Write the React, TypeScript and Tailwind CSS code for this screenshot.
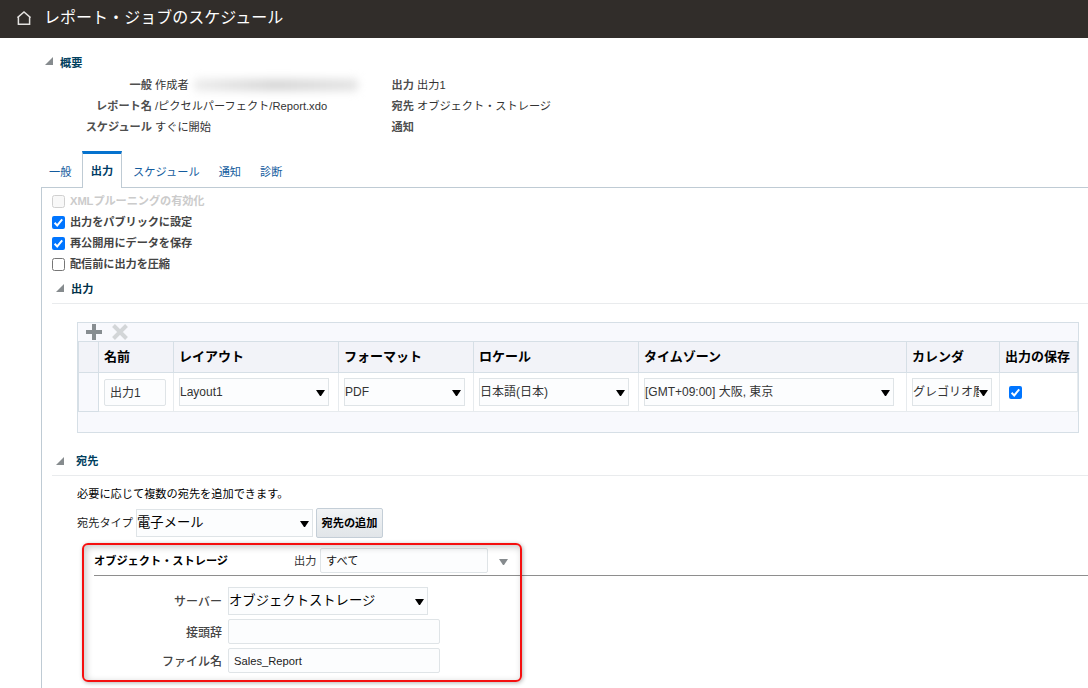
import clsx from "clsx";

const font = "font-['Liberation_Sans','Noto_Sans_CJK_JP',sans-serif]";

const tabs = ["一般", "出力", "スケジュール", "通知", "診断"];

const options = [
  { label: "XMLプルーニングの有効化", checked: false, disabled: true },
  { label: "出力をパブリックに設定", checked: true },
  { label: "再公開用にデータを保存", checked: true },
  { label: "配信前に出力を圧縮", checked: false },
];

const columns = [
  { title: "名前", width: "w-[75px]" },
  { title: "レイアウト", width: "w-[165px]", value: "Layout1", select: "w-[150px]" },
  { title: "フォーマット", width: "w-[135px]", value: "PDF", select: "w-[121px]" },
  { title: "ロケール", width: "w-[165px]", value: "日本語(日本)", select: "w-[150px]" },
  { title: "タイムゾーン", width: "w-[268px]", value: "[GMT+09:00] 大阪, 東京", select: "w-[250px]" },
  { title: "カレンダ", width: "w-[93px]", value: "グレゴリオ暦", select: "w-[80px]" },
  { title: "出力の保存", width: "w-[78px]" },
];

function Disclosure({ className }: { className?: string }) {
  return (
    <svg className={clsx("shrink-0", className)} width="8" height="8" viewBox="0 0 8 8">
      <path d="M8 0v8H0z" fill="#868b8e" />
    </svg>
  );
}

function Arrow({ color = "#000" }: { color?: string }) {
  return (
    <svg className="shrink-0" width="9" height="6" viewBox="0 0 9 6">
      <path d="M0 0h9L5 6H4z" fill={color} />
    </svg>
  );
}

function Checkbox({ checked, disabled }: { checked?: boolean; disabled?: boolean }) {
  if (checked) {
    return (
      <svg className="shrink-0" width="13" height="13" viewBox="0 0 13 13">
        <rect width="13" height="13" rx="2" fill="#0075ff" />
        <path d="M2.6 6.8l2.6 2.6 5-6" fill="none" stroke="#fff" strokeWidth="2" />
      </svg>
    );
  }
  return (
    <span
      className={clsx(
        "size-[13px] shrink-0 rounded-[2.5px] border",
        disabled ? "border-[#d0d0d0] bg-[#f8f8f8]" : "border-[#767676] bg-white"
      )}
    />
  );
}

function Select({ value, className }: { value: string; className?: string }) {
  return (
    <div className={clsx("flex h-7 items-center border border-[#dfe4e7] bg-[#fcfdfe] pr-[3px]", className)}>
      <span className="min-w-0 flex-1 overflow-hidden whitespace-nowrap">{value}</span>
      <span className="mt-px flex">
        <Arrow />
      </span>
    </div>
  );
}

function Field({ value, className }: { value?: string; className?: string }) {
  return (
    <div className={clsx("flex items-center rounded-[2px] border border-[#dfe4e7] bg-[#fcfdfe] pl-[5px]", className)}>
      {value}
    </div>
  );
}

function SummaryRow({ label, value, wide }: { label: string; value?: string; wide?: boolean }) {
  return (
    <div className="flex h-[21px] items-center">
      <span className={clsx("text-right font-bold text-[#4f4f4f]", wide ? "w-[152px]" : "w-[23px]")}>{label}</span>
      <span className="ml-[3px] text-[#333]">{value}</span>
    </div>
  );
}

function Header() {
  return (
    <header className="flex h-[38px] items-center bg-[#312d2a] pb-[3px] text-white">
      <svg className="ml-[17px] mt-[1px]" width="14" height="14" viewBox="0 0 14 14" fill="none" stroke="#e4e2e0" strokeWidth="1.5">
        <path d="M.4 6.6L7 1l6.6 5.6M1.4 5.8v7.4h11.2V5.8" />
      </svg>
      <h1 className="ml-[13px] text-base leading-none tracking-[0.03px]">レポート・ジョブのスケジュール</h1>
    </header>
  );
}

function Summary() {
  return (
    <section className="h-[113px] pt-[15px]">
      <div className="flex h-5 items-center">
        <Disclosure className="ml-[45px] mb-1" />
        <h2 className="ml-[7px] font-bold text-[#00405e]">概要</h2>
      </div>
      <div className="flex pt-px">
        <div className="w-[391px]">
          <div className="flex">
            <SummaryRow label="一般" value="作成者" wide />
            <span className="ml-[5px] mt-[5px] h-3 w-[164px] rounded bg-gradient-to-r from-[#ececec] via-[#d6d6d6] to-[#e4e4e4] blur-[4px]" />
          </div>
          <SummaryRow label="レポート名" value="/ピクセルパーフェクト/Report.xdo" wide />
          <SummaryRow label="スケジュール" value="すぐに開始" wide />
        </div>
        <div>
          <SummaryRow label="出力" value="出力1" />
          <SummaryRow label="宛先" value="オブジェクト・ストレージ" />
          <SummaryRow label="通知" />
        </div>
      </div>
    </section>
  );
}

function Tabs() {
  return (
    <nav className="ml-[41px] flex h-[37px] border-b border-[#bfcbd4]">
      {tabs.map((tab) => (
        <a
          key={tab}
          className={clsx(
            "flex items-center whitespace-nowrap",
            tab === "出力"
              ? "mr-[2px] h-[37px] w-10 justify-center border-x border-t-3 border-x-[#bfcbd4] border-t-[#0572ce] bg-white font-bold text-[#003c66]"
              : "pt-[5px] text-[#145c9e]",
            tab === "一般" && "w-[41px] pl-2",
            tab === "スケジュール" && "px-[9px] tracking-[0.05px]",
            tab === "通知" && "px-[10px]",
            tab === "診断" && "px-[9px]"
          )}
        >
          {tab}
        </a>
      ))}
    </nav>
  );
}

function OutputTable() {
  return (
    <div className="ml-[35px] mt-[18px] h-[111px] w-[1002px] border border-[#d6dfe6] bg-[#f8f9fd]">
      <div className="flex h-[18px] items-center">
        <svg className="ml-2" width="16" height="16" viewBox="0 0 16 16">
          <path d="M8 0v16M0 8h16" stroke="#878d91" strokeWidth="4" />
        </svg>
        <svg className="ml-[10px]" width="16" height="16" viewBox="0 0 16 16">
          <path d="M1.5 1.5l13 13M14.5 1.5l-13 13" stroke="#d3d6d8" strokeWidth="4" />
        </svg>
      </div>
      <div className="flex h-8 border-y border-[#d6dfe6] bg-[#f2f3f8] text-[13px] font-bold text-black">
        <span className="w-[21px] border-x border-[#d6dfe6]" />
        {columns.map((col) => (
          <span key={col.title} className={clsx("flex shrink-0 items-center whitespace-nowrap border-r border-[#d6dfe6] pl-[5px]", col.width)}>
            {col.title}
          </span>
        ))}
      </div>
      <div className="flex h-[39px] text-xs text-[#333]">
        <span className="w-[21px] border border-t-0 border-[#d6dfe6]" />
        {columns.map((col) => (
          <div key={col.title} className={clsx("flex shrink-0 items-center border-b border-r border-[#e7ebee] bg-white pl-[5px]", col.width)}>
            {col.value && <Select value={col.value} className={col.select} />}
            {col.title === "名前" && <Field value="出力1" className="mt-px h-[27px] w-[62px]" />}
            {col.title === "出力の保存" && (
              <span className="ml-1">
                <Checkbox checked />
              </span>
            )}
          </div>
        ))}
      </div>
    </div>
  );
}

function StorageForm() {
  return (
    <div className="relative ml-[52px] mt-[9px] h-[141px]">
      <div className="flex h-[29px] items-center border-b border-[#8e8e8e]">
        <span className="-mt-px w-[200px] font-bold text-black">オブジェクト・ストレージ</span>
        <span className="-mt-px w-[26px] text-[#333]">出力</span>
        <Field value="すべて" className="-mt-px h-[25px] w-[168px] text-[#111]" />
        <span className="ml-[11px] mt-[2px] flex">
          <Arrow color="#868b8e" />
        </span>
      </div>
      <div className="flex flex-col gap-1 pt-[11px]">
        <div className="flex items-center">
          <span className="w-32 pt-[2px] text-right text-xs font-medium text-[#444]">サーバー</span>
          <Select value="オブジェクトストレージ" className="ml-[6px] w-[200px] text-[13.33px] text-black" />
        </div>
        <div className="flex items-center">
          <span className="w-32 pt-[3px] text-right text-xs font-medium text-[#444]">接頭辞</span>
          <Field className="ml-[6px] h-[25px] w-[212px]" />
        </div>
        <div className="flex items-center">
          <span className="w-32 pt-[3px] text-right text-xs font-medium text-[#444]">ファイル名</span>
          <Field value="Sales_Report" className="ml-[6px] h-[25px] w-[212px] text-[11.2px] text-[#222]" />
        </div>
      </div>
      {/* highlight frame */}
      <div className="absolute -left-3 -top-1 h-[139px] w-[440px] rounded-[6px] border-2 border-[#f50f0f] shadow-[1px_1px_4px_rgba(0,0,0,0.3),inset_2px_2px_7px_rgba(0,0,0,0.22)]" />
    </div>
  );
}

export default function App() {
  return (
    <div className={clsx("h-[688px] w-[1088px] overflow-hidden bg-white text-[11.2px] leading-[16px]", font)}>
      <Header />
      <Summary />
      <Tabs />
      <main className="ml-[41px] h-[500px] border-l border-[#bfcbd4] pt-[3px]">
        <div>
          {options.map((opt) => (
            <label key={opt.label} className="ml-[10px] flex h-[21px] items-center gap-[5px]">
              <Checkbox checked={opt.checked} disabled={opt.disabled} />
              <span className={clsx("-mt-px font-bold tracking-[-0.08px]", opt.disabled ? "text-[#cbcbcb]" : "text-[#444]")}>{opt.label}</span>
            </label>
          ))}
        </div>
        <div className="ml-[10px] flex h-[29px] items-center border-b border-[#e9ebed]">
          <Disclosure className="ml-[4px] mb-[2px]" />
          <h2 className="ml-[7px] font-bold text-[#003049]">出力</h2>
        </div>
        <OutputTable />
        <div className="ml-[10px] mt-[14px] flex h-[29px] items-center border-b border-[#e9ebed]">
          <Disclosure className="ml-[4px] mb-px" />
          <h2 className="ml-[12px] font-bold text-[#00405e]">宛先</h2>
        </div>
        <p className="ml-[35px] mt-[10px] text-black">必要に応じて複数の宛先を追加できます。</p>
        <div className="ml-[35px] mt-[6px] flex h-[30px] items-center">
          <span className="w-[59px] text-[#222]">宛先タイプ</span>
          <Select value="電子メール" className="w-[177px] text-[13.33px] text-black" />
          <button className="ml-[3px] h-[30px] w-[67px] whitespace-nowrap rounded-[2px] border border-[#c4ced7] bg-gradient-to-b from-[#f1f3f5] to-[#e1e5e9] font-bold text-black">
            宛先の追加
          </button>
        </div>
        <StorageForm />
      </main>
    </div>
  );
}
